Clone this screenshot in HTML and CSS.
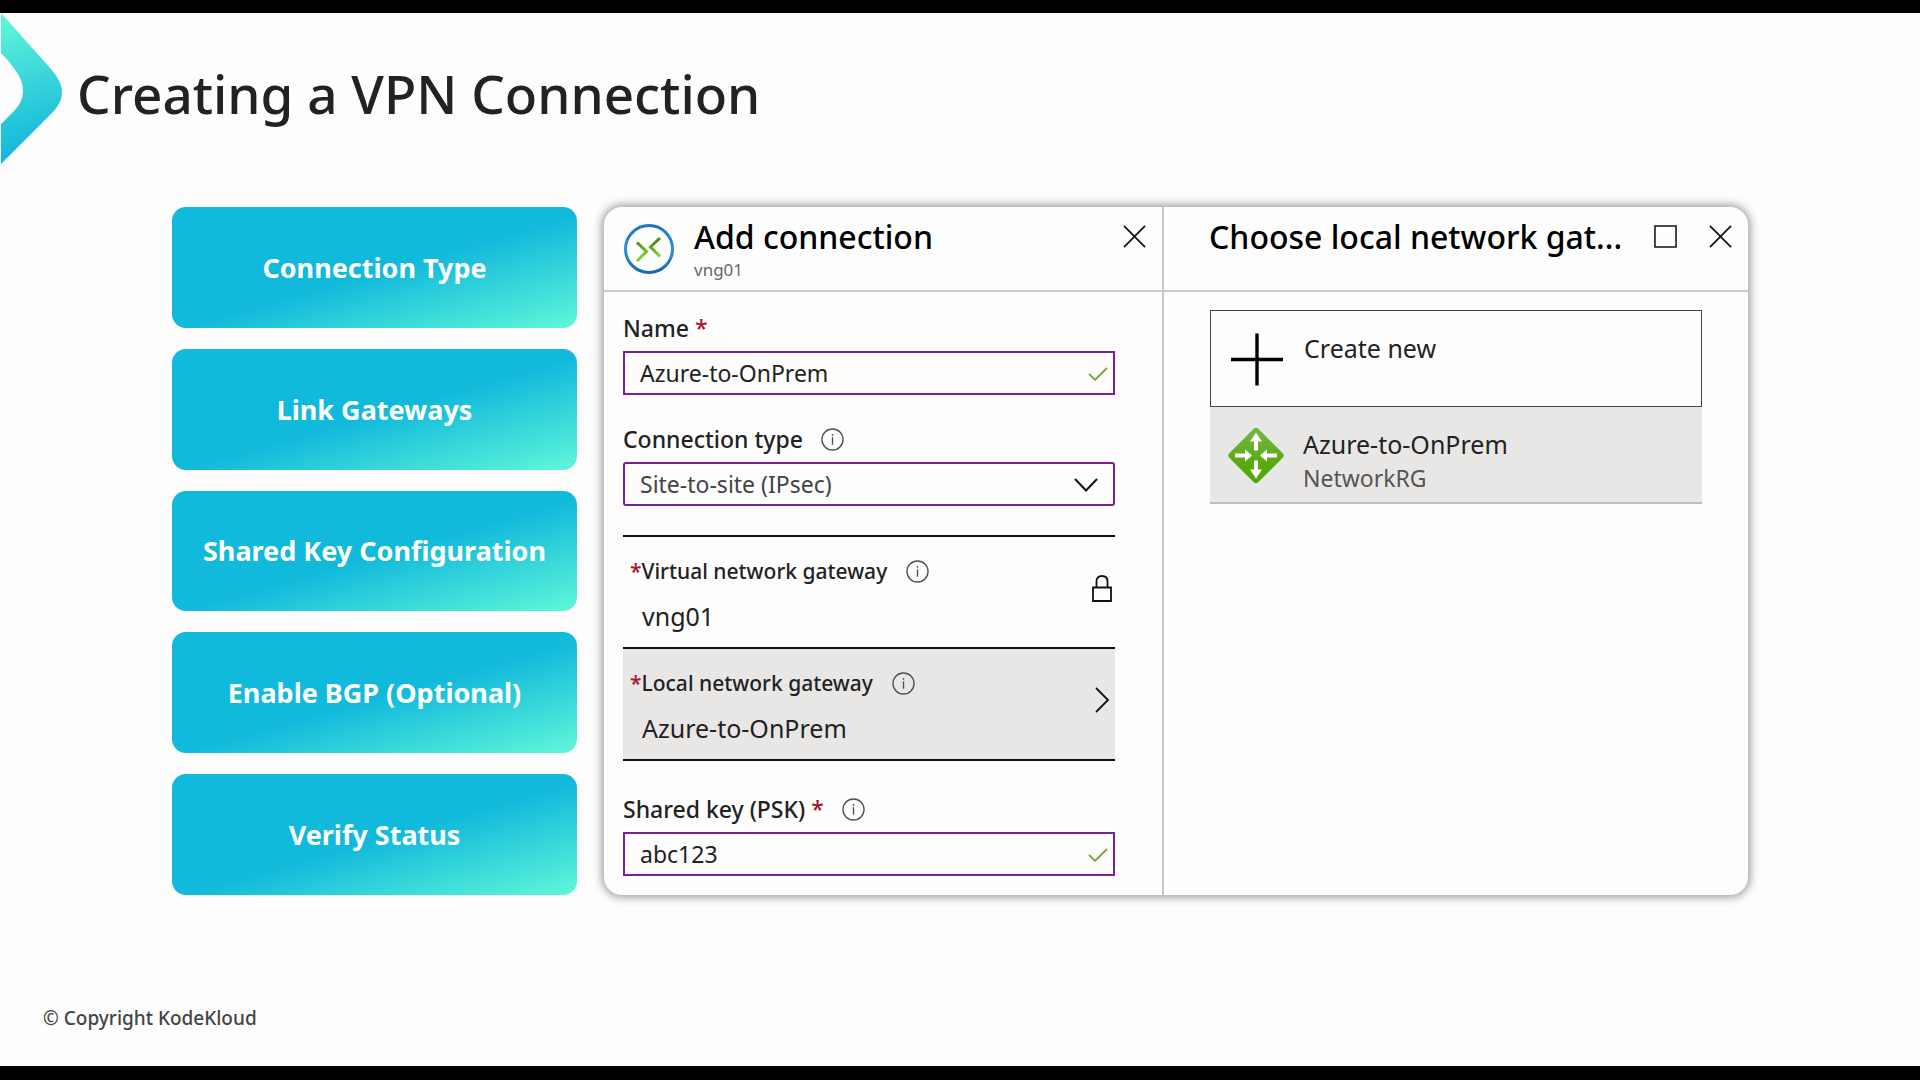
FILE: index.html
```
<!DOCTYPE html>
<html lang="en">
<head>
<meta charset="utf-8">
<title>Creating a VPN Connection</title>
<link rel="stylesheet" href="styles.css">
</head>
<body>
<svg class="defs" aria-hidden="true">
  <defs>
    <symbol id="info" viewBox="0 0 24 24"><circle cx="12" cy="12" r="11" fill="none" stroke="#505050" stroke-width="1.4"/><path d="M12 9.6v8M12 6.2v1.8" fill="none" stroke="#505050" stroke-width="1.4"/></symbol>
    <symbol id="close" viewBox="0 0 24 24"><path d="M1 1l22 22M23 1L1 23" fill="none" stroke="#111" stroke-width="1.8"/></symbol>
    <symbol id="check" viewBox="0 0 20 14"><path d="M1 6.8l6 6L19 1" fill="none" stroke="#6aa82c" stroke-width="1.8"/></symbol>
  </defs>
</svg>
<main class="slide">
  <header class="slide-header">
    <svg class="brand" viewBox="0 0 62 151" aria-hidden="true">
      <defs><linearGradient id="brandFill" x1="0" y1="0" x2="0.1" y2="1"><stop offset="0" stop-color="#64f8d6"/><stop offset="0.5" stop-color="#38d4da"/><stop offset="1" stop-color="#10b6dc"/></linearGradient></defs>
      <path d="M0 0L50 56Q62 70 61 80Q61 89 52 99L0 151V111L14 97Q22 88 22 78Q22 68 15 58Q9 49 0 40Z" fill="url(#brandFill)"/>
    </svg>
    <h1 class="slide-title">Creating a VPN Connection</h1>
  </header>

  <div class="content">
    <ol class="steps">
      <li class="step">Connection Type</li>
      <li class="step">Link Gateways</li>
      <li class="step">Shared Key Configuration</li>
      <li class="step">Enable BGP (Optional)</li>
      <li class="step">Verify Status</li>
    </ol>

    <div class="portal">
      <section class="pane">
        <header class="pane-header">
          <svg class="connection-icon" viewBox="0 0 50 50" aria-hidden="true">
            <defs>
              <linearGradient id="ring" x1="0" y1="0" x2="0" y2="1"><stop offset="0" stop-color="#1d75c4"/><stop offset="0.5" stop-color="#2f8fdc"/><stop offset="1" stop-color="#1768ae"/></linearGradient>
              <linearGradient id="blade" x1="0" y1="0" x2="0" y2="1"><stop offset="0.2" stop-color="#4f8f20"/><stop offset="0.8" stop-color="#7cd431"/></linearGradient>
            </defs>
            <circle cx="25" cy="25" r="23.5" fill="#fdfdfd" stroke="url(#ring)" stroke-width="3"/>
            <path d="M13 18.5L22.5 27.5L13 37M36 14L26.5 23L36 32.5" fill="none" stroke="url(#blade)" stroke-width="3"/>
          </svg>
          <div class="pane-heading">
            <h2 class="pane-title">Add connection</h2>
            <p class="pane-subtitle">vng01</p>
          </div>
          <button class="icon-button" type="button" aria-label="Close"><svg class="tool-icon"><use href="#close"/></svg></button>
        </header>

        <form class="form">
          <div class="field">
            <div class="field-label"><label for="name">Name <span class="required">*</span></label></div>
            <div class="control">
              <input class="box" id="name" type="text" value="Azure-to-OnPrem">
              <svg class="check"><use href="#check"/></svg>
            </div>
          </div>

          <div class="field">
            <div class="field-label"><label for="type">Connection type</label><svg class="info"><use href="#info"/></svg></div>
            <div class="control">
              <select class="box box-select" id="type"><option>Site-to-site (IPsec)</option></select>
              <svg class="arrow-down" viewBox="0 0 24 14"><path d="M1 1l11 11.5L23 1" fill="none" stroke="#111" stroke-width="2"/></svg>
            </div>
          </div>

          <div class="gateways">
            <button class="gateway" type="button">
              <span class="gateway-text">
                <span class="gateway-label"><span><span class="required">*</span>Virtual network gateway</span><svg class="info"><use href="#info"/></svg></span>
                <span class="gateway-value">vng01</span>
              </span>
              <svg class="gateway-icon" viewBox="0 0 24 28"><path d="M3 13.5H21V27H3ZM6.500 13.500V7.500Q6.500 2 12 2T17.500 7.500V13.500" fill="none" stroke="#111" stroke-width="1.800"/></svg>
            </button>
            <button class="gateway gateway-active" type="button">
              <span class="gateway-text">
                <span class="gateway-label"><span><span class="required">*</span>Local network gateway</span><svg class="info"><use href="#info"/></svg></span>
                <span class="gateway-value">Azure-to-OnPrem</span>
              </span>
              <svg class="gateway-icon" viewBox="0 0 24 28"><path d="M6 2L18 14L6 26" fill="none" stroke="#111" stroke-width="1.800"/></svg>
            </button>
          </div>

          <div class="field">
            <div class="field-label"><label for="psk">Shared key (PSK) <span class="required">*</span></label><svg class="info"><use href="#info"/></svg></div>
            <div class="control">
              <input class="box" id="psk" type="text" value="abc123">
              <svg class="check"><use href="#check"/></svg>
            </div>
          </div>
        </form>
      </section>

      <section class="pane pane-choose">
        <header class="pane-header">
          <div class="pane-heading"><h2 class="pane-title">Choose local network gat...</h2></div>
          <button class="icon-button" type="button" aria-label="Maximize"><svg class="tool-icon" viewBox="0 0 24 24"><path d="M1 1H23V23H1Z" fill="none" stroke="#111" stroke-width="1.600"/></svg></button>
          <button class="icon-button" type="button" aria-label="Close"><svg class="tool-icon"><use href="#close"/></svg></button>
        </header>
        <div class="choices">
          <button class="choice choice-new" type="button">
            <svg class="choice-icon" viewBox="0 0 56 56"><path d="M2 28H54M28 2V54" fill="none" stroke="#000" stroke-width="3.400"/></svg>
            <span class="choice-text"><span>Create new</span></span>
          </button>
          <button class="choice choice-selected" type="button">
            <svg class="choice-icon" viewBox="0 0 56 56">
              <defs><linearGradient id="leaf" x1="0" y1="0" x2="1" y2="1"><stop offset="0.2" stop-color="#70b43a"/><stop offset="0.7" stop-color="#55a80c"/></linearGradient></defs>
              <rect x="7.500" y="7.500" width="41" height="41" rx="3.500" transform="rotate(45 28 28)" fill="url(#leaf)"/>
              <path d="M28 5L34 14H30V23H26V14H22ZM28 51L34 42H30V33H26V42H22ZM24 28L17 34V30H7V26H17V22ZM32 28L39 34V30H49V26H39V22Z" fill="#fff"/>
            </svg>
            <span class="choice-text"><span>Azure-to-OnPrem</span><span class="choice-note">NetworkRG</span></span>
          </button>
        </div>
      </section>
    </div>
  </div>

  <footer class="slide-footer">© Copyright KodeKloud</footer>
</main>
</body>
</html>
```
FILE: styles.css
```
* { box-sizing: border-box; }

body {
  margin: 0;
  min-height: 100vh;
  display: flex;
  flex-direction: column;
  padding: 13px 0 14px;
  background: #000;
  color: #222;
  font-family: "Noto Sans", "Open Sans", sans-serif;
}

h1, h2, p, ol { margin: 0; padding: 0; font-weight: 400; }
svg { display: block; flex: none; }
button, input, select { font: inherit; color: inherit; margin: 0; }
button { padding: 0; border: 0; background: none; text-align: left; }

.defs { position: absolute; width: 0; height: 0; }

.slide { flex: 1; display: flex; flex-direction: column; background: #fdfdfd; }

.slide-header { display: flex; gap: 14px; padding-left: 1px; }
.brand { width: 62px; height: 151px; }
.slide-title { padding-top: 51px; font-size: 53px; font-weight: 500; line-height: 60px; }

.content {
  display: grid;
  grid-template-columns: 405fr 1144fr;
  gap: 27px;
  margin: 43px 0;
  padding: 0 172px;
}

.steps { display: grid; grid-auto-rows: 1fr; gap: 21px; list-style: none; }
.step {
  display: flex;
  align-items: center;
  justify-content: center;
  padding-top: 1px;
  border-radius: 14px;
  background: linear-gradient(164deg, #11b9db 52%, #60f7d9 100%);
  color: #fff;
  font-size: 27px;
  font-weight: 700;
  line-height: 36px;
}

.portal {
  display: grid;
  grid-template-columns: minmax(0, 558fr) minmax(0, 586fr);
  border-radius: 18px;
  background: #fdfdfd;
  box-shadow: 0 0 10px 2px rgba(0, 0, 0, 0.4);
}
.pane-choose { border-left: 2px solid #c9c9c9; }

.pane-header {
  display: flex;
  align-items: flex-start;
  min-height: 85px;
  padding: 10px 16px 7px 20px;
  border-bottom: 2px solid #cbcbcb;
  color: #000;
}
.pane-choose .pane-header { padding-left: 45px; }
.connection-icon { width: 50px; height: 50px; margin: 7px 20px 0 0; }
.pane-heading { flex: 1; min-width: 0; }
.pane-title { font-size: 32px; font-weight: 500; line-height: 40px; white-space: nowrap; }
.pane-subtitle { color: #666; font-size: 17px; line-height: 26px; }
.icon-button { margin: 8px 0 0; }
.icon-button + .icon-button { margin-left: 32px; }
.tool-icon { width: 23px; height: 23px; }

.form {
  display: flex;
  flex-direction: column;
  gap: 29px;
  padding: 21px 47px 19px 19px;
}
.field { display: flex; flex-direction: column; gap: 8px; }
.field-label {
  display: flex;
  align-items: center;
  gap: 18px;
  font-size: 23px;
  font-weight: 500;
  line-height: 30px;
}
.required { color: #a4122c; }
.info { width: 23px; height: 23px; }

.control { position: relative; }
.box {
  display: block;
  width: 100%;
  height: 44px;
  padding: 0 15px;
  border: 2px solid #7a1f96;
  border-radius: 0;
  background: #fdfdfd;
  font-size: 23px;
  outline: 0;
}
.box-select { appearance: none; border-radius: 3px; color: #444; }
.check { position: absolute; right: 7px; top: 16px; width: 20px; height: 14px; }
.arrow-down { position: absolute; right: 17px; top: 16px; width: 24px; height: 14px; }

.gateways { margin-bottom: 4px; border-bottom: 2px solid #111; }
.gateway {
  display: flex;
  align-items: center;
  width: 100%;
  padding: 19px 1px 16px 7px;
  border-top: 2px solid #111;
}
.gateway-active { background: #e8e7e6; }
.gateway-text { flex: 1; display: flex; flex-direction: column; gap: 15px; }
.gateway-label {
  display: flex;
  align-items: center;
  gap: 19px;
  font-size: 21px;
  font-weight: 500;
  line-height: 30px;
}
.gateway-value { padding-left: 12px; font-size: 25px; line-height: 30px; }
.gateway-icon { width: 24px; height: 28px; margin-bottom: 12px; }

.choices { padding: 18px 46px; }
.choice { display: flex; align-items: flex-start; gap: 19px; width: 100%; min-height: 97px; padding: 20px 18px 7px; }
.choice-new { border: 1px solid #444; }
.choice-selected { border-bottom: 2px solid #c0c0c0; background: #e8e7e6; }
.choice-icon { width: 56px; height: 57px; }
.choice-text { display: flex; flex-direction: column; font-size: 25px; line-height: 34px; }
.choice-note { color: #555; font-size: 23px; }

.slide-footer { margin-top: auto; padding: 0 43px 35px; color: #444; font-size: 19px; font-weight: 500; line-height: 26px; }
```
